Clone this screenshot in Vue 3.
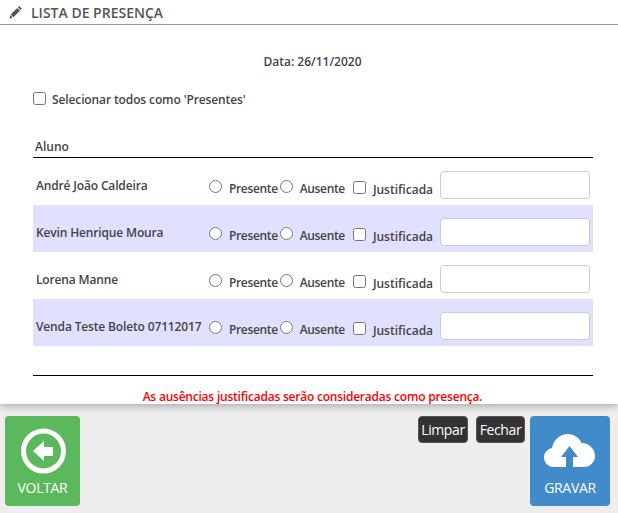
<script setup>
const rows = [
  { name: 'André João Caldeira', alt: false },
  { name: 'Kevin Henrique Moura', alt: true },
  { name: 'Lorena Manne', alt: false },
  { name: 'Venda Teste Boleto 07112017', alt: true }
]
</script>

<template>
  <div class="page">
    <main class="sheet">
      <header class="title">
        <svg class="pencil" viewBox="0 0 14 14" width="14" height="14" aria-hidden="true">
          <path fill="#555" d="M10.2 1.1 12.9 3.8 11.6 5.1 8.9 2.4ZM8.3 3 11 5.7 4.4 12.3 1.7 9.6ZM1.3 10.2 3.8 12.7 0.4 13.6Z" />
        </svg>
        <span>LISTA DE PRESENÇA</span>
      </header>
      <p class="date">Data: 26/11/2020</p>
      <label class="select-all"><input type="checkbox" /><span>Selecionar todos como 'Presentes'</span></label>
      <section class="table">
        <div class="head">Aluno</div>
        <div v-for="row in rows" :key="row.name" class="row" :class="{ alt: row.alt }">
          <div class="name">{{ row.name }}</div>
          <label class="opt first"><input type="radio" :name="row.name" /><span>Presente</span></label>
          <label class="opt second"><input type="radio" :name="row.name" /><span>Ausente</span></label>
          <label class="opt just"><input type="checkbox" /><span>Justificada</span></label>
          <input class="note" type="text" />
        </div>
      </section>
      <p class="warning">As ausências justificadas serão consideradas como presença.</p>
    </main>
    <footer class="actions">
      <button class="tile green" type="button">
        <svg viewBox="0 0 46 46" width="46" height="46" aria-hidden="true">
          <circle cx="23.5" cy="23" r="20" fill="none" stroke="#fff" stroke-width="5" />
          <path fill="#fff" d="M13 23 24 13V19H33V28H24V33Z" />
        </svg>
        <span>VOLTAR</span>
      </button>
      <div class="right">
        <button class="small limpar" type="button">Limpar</button>
        <button class="small fechar" type="button">Fechar</button>
        <button class="tile blue" type="button">
          <svg viewBox="0 0 51 33" width="51" height="33" aria-hidden="true">
            <path fill="#fff" d="M22 33H10C4 33 0 28.500 0 23.500 0 18.500 3.500 15 8 14 9.500 6 16 0 24 0 30 0 35 3.500 37.500 9 45 9 51 15 51 22 51 28 46 33 40 33H29V23H34L25.500 12 17 23H22Z" />
          </svg>
          <span>GRAVAR</span>
        </button>
      </div>
    </footer>
  </div>
</template>

<style scoped>
.page {
  width: 618px;
  height: 513px;
  background: #eee;
  overflow: hidden;
  font-family: "Open Sans", sans-serif;
  color: #444;
}
.sheet {
  height: 404px;
  background: #fff;
  box-shadow: 0 2px 8px rgba(0, 0, 0, 0.3);
  position: relative;
  box-sizing: border-box;
}
.title {
  height: 25px;
  box-sizing: border-box;
  border-bottom: 1px solid #999;
  display: flex;
  align-items: center;
  padding-left: 9px;
  gap: 8px;
  font-size: 14px;
  font-weight: 600;
  color: #555;
}
.date {
  margin: 0;
  padding: 28px 0 0 7px;
  text-align: center;
  font-size: 12px;
  line-height: 17px;
  font-weight: 600;
}
.select-all {
  display: flex;
  align-items: center;
  margin: 21px 0 0 33px;
  height: 17px;
  font-size: 12px;
  font-weight: 600;
  letter-spacing: -0.12px;
}
.select-all input {
  margin: 0 6px 2px 0;
  width: 13px;
  height: 13px;
}
.table {
  margin: 30px 25px 0 33px;
  border-bottom: 1px solid #000;
  padding-bottom: 29px;
}
.head {
  height: 19px;
  border-bottom: 1px solid #000;
  padding-left: 2px;
  font-size: 12px;
  line-height: 18px;
  font-weight: 600;
}
.row {
  height: 47px;
  padding-top: 6px;
  box-sizing: border-box;
  display: flex;
  align-items: center;
  font-size: 12px;
  font-weight: 600;
}
.row.alt {
  background: #e0e0ff;
}
.name {
  width: 176px;
  margin-top: 2px;
  padding-left: 3px;
  box-sizing: border-box;
  white-space: nowrap;
  letter-spacing: -0.15px;
}
.opt {
  display: flex;
  align-items: flex-start;
  white-space: nowrap;
  letter-spacing: -0.35px;
}
.opt input {
  margin: 8px 7px 0 0;
  width: 13px;
  height: 13px;
}
.opt span {
  margin-top: 8px;
}
.second {
  margin-left: 2px;
}
.just {
  margin-left: 8px;
  letter-spacing: 0;
}
.just input {
  margin-top: 10px;
}
.just span {
  margin-top: 10px;
}
.note {
  width: 150px;
  height: 28px;
  margin-left: 7px;
  box-sizing: border-box;
  border: 1px solid #ccc;
  border-radius: 4px;
  background: #fff;
}
.warning {
  margin: 12px 0 0;
  padding-left: 7px;
  text-align: center;
  font-size: 12px;
  line-height: 17px;
  font-weight: 600;
  letter-spacing: -0.22px;
  color: #f00;
}
.actions {
  display: flex;
  justify-content: space-between;
  padding: 12px 8px 0 5px;
}
.right {
  display: flex;
  align-items: flex-start;
}
button {
  font-family: inherit;
  cursor: pointer;
}
.tile {
  height: 90px;
  border: 0;
  border-radius: 4px;
  color: #fff;
  font-size: 14px;
  letter-spacing: -0.3px;
  padding: 0;
  display: flex;
  flex-direction: column;
  align-items: center;
}
.tile span {
  line-height: 19px;
}
.green {
  width: 75px;
  background: #5cb85c;
  padding-top: 12px;
}
.green svg {
  margin-left: 1px;
}
.green span {
  margin-top: 4px;
}
.blue {
  width: 80px;
  background: #428bca;
  padding-top: 18px;
  margin-left: 5px;
}
.blue svg {
  margin-right: 1px;
}
.blue span {
  margin-top: 11px;
}
.small {
  height: 27px;
  padding: 0;
  border: 1px solid #555;
  border-radius: 4px;
  background: #333;
  color: #fff;
  font-size: 14px;
  letter-spacing: -0.4px;
  line-height: 1;
}
.limpar {
  width: 50px;
}
.fechar {
  width: 49px;
  margin-left: 8px;
}
</style>
